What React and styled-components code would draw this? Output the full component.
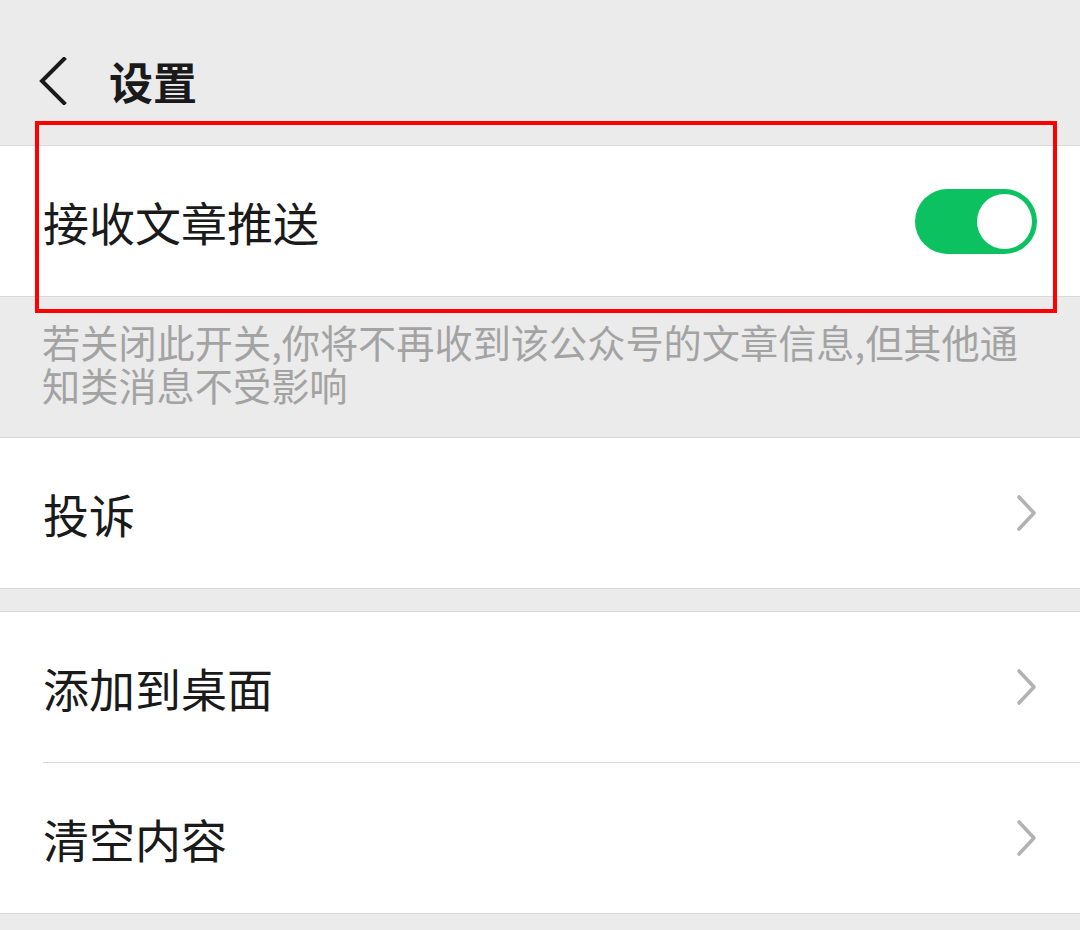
import React, { useState } from "react"
import styled, { createGlobalStyle } from "styled-components"

const GlobalStyle = createGlobalStyle`
  html, body {
    margin: 0;
    padding: 0;
    background: #ebebeb;
    font-family: "Noto Sans CJK SC", "Noto Sans", sans-serif;
  }
`

const Page = styled.div`
  position: relative;
  width: 1080px;
  min-height: 930px;
  background: #ebebeb;
  overflow: hidden;
`

const Header = styled.div`
  display: flex;
  align-items: center;
  height: 145px;
  padding: 16px 0 0 38px;
  box-sizing: border-box;
  gap: 39px;
`

const BackButton = styled.button`
  display: flex;
  align-items: center;
  justify-content: center;
  padding: 0;
  border: none;
  background: none;
  width: 32px;
  height: 48px;
  cursor: pointer;
`

const Title = styled.h1`
  margin: 0;
  font-size: 44px;
  font-weight: 700;
  color: #1a1a1a;
`

const Section = styled.div`
  background: #fff;
  border-top: 1px solid #d9d9d9;
  border-bottom: 1px solid #d9d9d9;
  margin-top: ${p => p.gap || 0}px;
`

const Row = styled.div`
  display: flex;
  align-items: center;
  justify-content: space-between;
  height: 150px;
  padding: 0 42px 0 43px;
  box-sizing: border-box;
  cursor: pointer;
`

const Divider = styled.div`
  height: 1px;
  background: #d9d9d9;
  margin-left: 43px;
`

const Label = styled.span`
  font-size: 46px;
  color: #1a1a1a;
`

const Hint = styled.p`
  margin: 0;
  height: 140px;
  box-sizing: border-box;
  padding: 23px 40px 0 42px;
  font-size: 38.2px;
  line-height: 43px;
  color: #a3a3a3;
`

const Track = styled.button`
  position: relative;
  width: 122px;
  height: 65px;
  margin-right: 1px;
  padding: 0;
  border: none;
  border-radius: 33px;
  background: ${p => (p.on ? "#0bc160" : "#e5e5e5")};
  cursor: pointer;
  transition: background 0.2s;
`

const Knob = styled.span`
  position: absolute;
  top: 5px;
  left: ${p => (p.on ? "62px" : "5px")};
  width: 55px;
  height: 55px;
  border-radius: 50%;
  background: #fff;
  transition: left 0.2s;
`

const Highlight = styled.div`
  position: absolute;
  left: 35px;
  top: 121px;
  width: 1022px;
  height: 192px;
  box-sizing: border-box;
  border: 4px solid #ff0000;
  pointer-events: none;
`

const Chevron = () => (
  <svg width="22" height="38" viewBox="0 0 22 38">
    <polyline
      points="3,3 18,19 3,35"
      fill="none"
      stroke="#b2b2b2"
      strokeWidth="3.6"
      strokeLinecap="round"
      strokeLinejoin="round"
    />
  </svg>
)

const BackIcon = () => (
  <svg width="32" height="48" viewBox="0 0 32 48">
    <polyline
      points="26,2 4,24 26,46"
      fill="none"
      stroke="#1a1a1a"
      strokeWidth="4"
      strokeLinecap="square"
    />
  </svg>
)

const App = () => {
  const [on, setOn] = useState(true)
  return (
    <Page>
      <GlobalStyle />
      <Header>
        <BackButton>
          <BackIcon />
        </BackButton>
        <Title>设置</Title>
      </Header>
      <Section>
        <Row onClick={() => setOn(!on)}>
          <Label>接收文章推送</Label>
          <Track on={on}>
            <Knob on={on} />
          </Track>
        </Row>
      </Section>
      <Hint>若关闭此开关,你将不再收到该公众号的文章信息,但其他通知类消息不受影响</Hint>
      <Section>
        <Row>
          <Label>投诉</Label>
          <Chevron />
        </Row>
      </Section>
      <Section gap={22}>
        <Row>
          <Label>添加到桌面</Label>
          <Chevron />
        </Row>
        <Divider />
        <Row>
          <Label>清空内容</Label>
          <Chevron />
        </Row>
      </Section>
      <Highlight />
    </Page>
  )
}

export default App
